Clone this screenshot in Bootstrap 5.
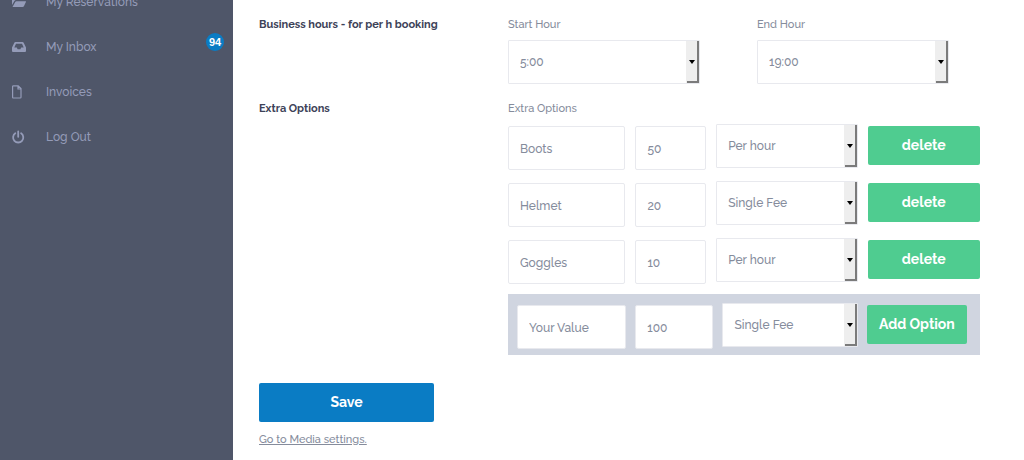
<!DOCTYPE html>
<html lang="en">
<head>
<meta charset="utf-8">
<meta name="viewport" content="width=device-width, initial-scale=1">
<title>Listing settings</title>
<link href="https://cdn.jsdelivr.net/npm/bootstrap@5.3.0/dist/css/bootstrap.min.css" rel="stylesheet">
<style>
  body { font-family: "Raleway", "Lato", sans-serif; font-size: 12px; font-weight: 500; line-height: 20px; color: #858c9c; overflow: hidden; }
  .sidebar { width: 233px; background: #4f5669; overflow: hidden; }
  .side-menu { margin-top: -21px; }
  .side-menu .nav-link { height: 45px; padding: 0 9px 0 12px; color: #949bb8; font-size: 12px; }
  .side-menu svg { width: 14px; height: 14px; margin-right: 20px; fill: currentColor; overflow: visible; }
  .count { width: 18px; height: 18px; background: #0a7cc4; color: #fff; font: 700 11px/18px "Liberation Sans", sans-serif; margin-bottom: 10px; }
  .content { padding: 15px 18px 0 26px; }
  .section-title { color: #3d4258; font-weight: 700; font-size: 11px; margin: 0; line-height: 20px; }
  .field-label { font-size: 11px; line-height: 20px; margin-bottom: 5px; display: block; }
  .hours { margin-bottom: 15px; }
  .box { height: 44px; border: 1px solid #e8e9ee; border-radius: 2px; color: #858c9c; font-size: 12px; font-weight: 500; padding: 2px 11px 0; background-color: #fff; min-width: 0; }
  select.box {
    appearance: none; padding-top: 0; border-radius: 1px;
    background:
      url("data:image/svg+xml,%3Csvg xmlns='http://www.w3.org/2000/svg' width='6' height='4'%3E%3Cpath d='M0 0h6L3 4z'/%3E%3C/svg%3E") right 4px center / 6px 4px no-repeat,
      linear-gradient(#7b7b7b, #7b7b7b) right top / 2px 100% no-repeat,
      linear-gradient(#7b7b7b, #7b7b7b) right bottom / 12px 2px no-repeat,
      linear-gradient(#eee, #eee) right top / 13px 100% no-repeat #fff;
  }
  .hour { width: 77%; }
  .options { margin-right: 26px; }
  .option-row { display: grid; grid-template-columns: 118fr 71fr 142fr 113fr; column-gap: 10px; height: 46px; margin-bottom: 11px; align-items: end; }
  .option-row select { align-self: start; }
  .option-row .btn { align-self: start; margin-top: 2px; }
  .btn-tall { height: 39px; padding: 0; border: 0; border-radius: 2px; font-size: 14px; font-weight: 700; color: #fff; }
  .btn-green, .btn-green:hover { background: #4fcc90; color: #fff; }
  .btn-blue, .btn-blue:hover { background: #0a7cc4; color: #fff; }
  .new-option { background: #d0d5e0; height: 61px; padding: 9px 13px 6px 9px; margin: -1px 0 28px; column-gap: 9px; grid-template-columns: 109fr 78fr 135fr 100fr; }
  .save { width: 175px; }
  .media-link, .media-link:hover { color: #858c9c; font-size: 11px; }
</style>
</head>
<body>
<div class="d-flex min-vh-100">
  <aside class="sidebar flex-shrink-0">
    <nav class="side-menu nav flex-column flex-nowrap" aria-label="Account">
      <a class="nav-link d-flex align-items-center" href="#">
        <svg viewBox="0 0 14 14" aria-hidden="true"><path d="M0 10V2.500Q0 1 1.500 1H4l1.300 1.500H10q1.500 0 1.500 1.500v1H4Q3 5 2.400 6zM.5 12 3.200 7q.4-.8 1.300-.8h9q.8 0 .4.800l-2 4.200q-.4.800-1.300.8z"/></svg>
        <span>My Reservations</span>
      </a>
      <a class="nav-link d-flex align-items-center" href="#">
        <svg viewBox="0 0 14 14" aria-hidden="true"><path fill-rule="evenodd" d="M3.500 2h7q.9 0 1.300.9L14 7.500V11q0 1-1 1H1q-1 0-1-1V7.500l2.200-4.600Q2.600 2 3.500 2zM4 3.700 2.300 7.500h2.500l.8 1.700h2.800l.8-1.700h2.500L10 3.700z"/></svg>
        <span>My Inbox</span>
        <span class="count rounded-circle text-center ms-auto">94</span>
      </a>
      <a class="nav-link d-flex align-items-center" href="#">
        <svg viewBox="0 0 14 14" aria-hidden="true"><path d="M1.500.8h4.700L9 3.600v8.600q0 .8-.8.800H1.400q-.8 0-.8-.8V1.600q0-.8.9-.8zM6 .8V4h3" fill="none" stroke="currentColor" stroke-width="1.200"/></svg>
        <span>Invoices</span>
      </a>
      <a class="nav-link d-flex align-items-center" href="#">
        <svg viewBox="0 0 14 14" aria-hidden="true"><path d="M3.300 3.200a5.100 5.100 0 1 0 5.800 0M6.200 1.500v5.300" fill="none" stroke="currentColor" stroke-width="1.800" stroke-linecap="round"/></svg>
        <span>Log Out</span>
      </a>
    </nav>
  </aside>

  <main class="content flex-grow-1">
    <form>
      <div class="row g-0 hours">
        <div class="col-4"><h2 class="section-title">Business hours - for per h booking</h2></div>
        <div class="col-4">
          <label class="field-label" for="start">Start Hour</label>
          <select class="box hour" id="start"><option>5:00</option></select>
        </div>
        <div class="col-4">
          <label class="field-label" for="end">End Hour</label>
          <select class="box hour" id="end"><option>19:00</option></select>
        </div>
      </div>
      <div class="row g-0">
        <div class="col-4"><h2 class="section-title">Extra Options</h2></div>
        <div class="col-8">
          <div class="options" role="group" aria-labelledby="extras">
            <span class="field-label" id="extras">Extra Options</span>
            <div class="option-row">
              <input class="box" aria-label="Name" value="Boots">
              <input class="box" aria-label="Price" value="50">
              <select class="box" aria-label="Charge"><option>Per hour</option><option>Single Fee</option></select>
              <button type="button" class="btn btn-tall btn-green">delete</button>
            </div>
            <div class="option-row">
              <input class="box" aria-label="Name" value="Helmet">
              <input class="box" aria-label="Price" value="20">
              <select class="box" aria-label="Charge"><option>Single Fee</option><option>Per hour</option></select>
              <button type="button" class="btn btn-tall btn-green">delete</button>
            </div>
            <div class="option-row">
              <input class="box" aria-label="Name" value="Goggles">
              <input class="box" aria-label="Price" value="10">
              <select class="box" aria-label="Charge"><option>Per hour</option><option>Single Fee</option></select>
              <button type="button" class="btn btn-tall btn-green">delete</button>
            </div>
            <div class="option-row new-option">
              <input class="box" aria-label="Name" value="Your Value">
              <input class="box" aria-label="Price" value="100">
              <select class="box" aria-label="Charge"><option>Single Fee</option><option>Per hour</option></select>
              <button type="button" class="btn btn-tall btn-green">Add Option</button>
            </div>
          </div>
        </div>
      </div>
      <button type="submit" class="btn btn-tall btn-blue save d-block">Save</button>
      <a class="media-link d-inline-block mt-2" href="#">Go to Media settings.</a>
    </form>
  </main>
</div>
<script src="https://cdn.jsdelivr.net/npm/bootstrap@5.3.0/dist/js/bootstrap.bundle.min.js"></script>
</body>
</html>
